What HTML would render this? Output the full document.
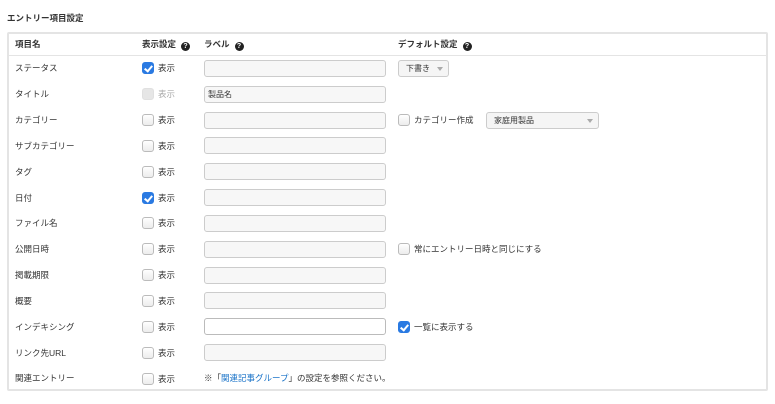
<!DOCTYPE html>
<html><head><meta charset="utf-8"><style>
*{margin:0;padding:0;box-sizing:border-box}
body{width:775px;height:404px;background:#fff;font-family:"Liberation Sans","Noto Sans CJK JP",sans-serif;font-size:8.5px;color:#333;position:relative;overflow:hidden}
.a{position:absolute;white-space:nowrap;line-height:12px}
.b{font-weight:bold}
.box{position:absolute;left:7px;top:32px;width:761px;height:359px;border:2px solid #e4e4e4;border-radius:2px}
.hl{position:absolute;left:9px;top:55px;width:757px;height:1px;background:#e4e4e4}
.cb{position:absolute;width:12px;height:12px;border:1px solid #bbb;border-radius:3px;background:linear-gradient(#fff,#ececec)}
.cb.on{background:#2a7ae2;border-color:#2a7ae2}
.cb.on:after{content:"";position:absolute;left:3px;top:1px;width:3px;height:6px;border:solid #fff;border-width:0 2px 2px 0;transform:rotate(40deg)}
.cb.dis{background:#e6e6e6;border-color:#e0e0e0}
.in{position:absolute;left:204px;width:182px;height:17px;border:1px solid #ccc;border-radius:3px;background:#f7f7f7}
.q{display:inline-block;width:9px;height:9px;border-radius:50%;background:#222;color:#fff;font-size:7px;line-height:9px;text-align:center;font-weight:bold;vertical-align:-1px;margin-left:5px}
.sel{position:absolute;height:17px;border:1px solid #ccc;border-radius:3px;background:#f5f5f5;font-size:8px;line-height:15px;padding-left:7px}
.tri{position:absolute;top:6px;width:0;height:0;border-left:3px solid transparent;border-right:3px solid transparent;border-top:4px solid #aaa}
</style></head><body>
<div class="a b" style="left:7px;top:12px">エントリー項目設定</div>
<div class="box"></div><div class="hl"></div>
<div class="a b" style="left:15px;top:38px">項目名</div>
<div class="a b" style="left:142px;top:38px">表示設定<span class="q">?</span></div>
<div class="a b" style="left:204px;top:38px">ラベル<span class="q">?</span></div>
<div class="a b" style="left:398px;top:38px">デフォルト設定<span class="q">?</span></div>

<div class="a" style="left:15px;top:62px">ステータス</div>
<div class="a" style="left:15px;top:88px">タイトル</div>
<div class="a" style="left:15px;top:114px">カテゴリー</div>
<div class="a" style="left:15px;top:140px">サブカテゴリー</div>
<div class="a" style="left:15px;top:166px">タグ</div>
<div class="a" style="left:15px;top:192px">日付</div>
<div class="a" style="left:15px;top:217px">ファイル名</div>
<div class="a" style="left:15px;top:243px">公開日時</div>
<div class="a" style="left:15px;top:269px">掲載期限</div>
<div class="a" style="left:15px;top:295px">概要</div>
<div class="a" style="left:15px;top:321px">インデキシング</div>
<div class="a" style="left:15px;top:347px">リンク先URL</div>
<div class="a" style="left:15px;top:372px">関連エントリー</div>

<div class="cb on" style="left:142px;top:62px"></div><div class="a" style="left:158px;top:62px">表示</div>
<div class="cb dis" style="left:142px;top:88px"></div><div class="a" style="left:158px;top:88px;color:#aaa">表示</div>
<div class="cb" style="left:142px;top:114px"></div><div class="a" style="left:158px;top:114px">表示</div>
<div class="cb" style="left:142px;top:140px"></div><div class="a" style="left:158px;top:140px">表示</div>
<div class="cb" style="left:142px;top:166px"></div><div class="a" style="left:158px;top:166px">表示</div>
<div class="cb on" style="left:142px;top:192px"></div><div class="a" style="left:158px;top:192px">表示</div>
<div class="cb" style="left:142px;top:217px"></div><div class="a" style="left:158px;top:217px">表示</div>
<div class="cb" style="left:142px;top:243px"></div><div class="a" style="left:158px;top:243px">表示</div>
<div class="cb" style="left:142px;top:269px"></div><div class="a" style="left:158px;top:269px">表示</div>
<div class="cb" style="left:142px;top:295px"></div><div class="a" style="left:158px;top:295px">表示</div>
<div class="cb" style="left:142px;top:321px"></div><div class="a" style="left:158px;top:321px">表示</div>
<div class="cb" style="left:142px;top:347px"></div><div class="a" style="left:158px;top:347px">表示</div>
<div class="cb" style="left:142px;top:373px"></div><div class="a" style="left:158px;top:373px">表示</div>

<div class="in" style="top:60px"></div>
<div class="in" style="top:86px;font-size:8px;line-height:15px;padding-left:3px">製品名</div>
<div class="in" style="top:112px"></div>
<div class="in" style="top:137px"></div>
<div class="in" style="top:163px"></div>
<div class="in" style="top:189px"></div>
<div class="in" style="top:215px"></div>
<div class="in" style="top:241px"></div>
<div class="in" style="top:267px"></div>
<div class="in" style="top:292px"></div>
<div class="in" style="top:318px;background:#fff;border-color:#bbb"></div>
<div class="in" style="top:344px"></div>
<div class="a" style="left:204px;top:372px;font-size:8.5px">※「<span style="color:#1a73c8">関連記事グループ</span>」の設定を参照ください。</div>

<div class="sel" style="left:398px;top:60px;width:51px">下書き<div class="tri" style="left:38px"></div></div>
<div class="cb" style="left:398px;top:114px"></div><div class="a" style="left:414px;top:114px">カテゴリー作成</div>
<div class="sel" style="left:486px;top:112px;width:113px">家庭用製品<div class="tri" style="left:100px"></div></div>
<div class="cb" style="left:398px;top:243px"></div><div class="a" style="left:414px;top:243px">常にエントリー日時と同じにする</div>
<div class="cb on" style="left:398px;top:321px"></div><div class="a" style="left:414px;top:321px">一覧に表示する</div>
</body></html>
